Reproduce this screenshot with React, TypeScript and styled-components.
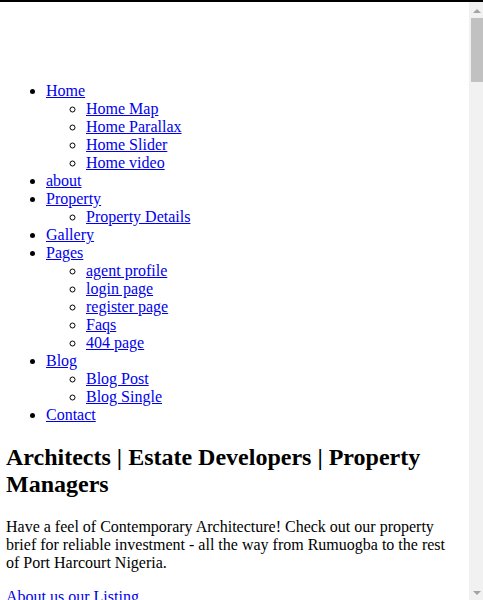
import React from "react";
import styled, { createGlobalStyle } from "styled-components";

const GlobalStyle = createGlobalStyle`
  html {
    border-top: 2px solid #000;
  }
  body {
    margin: 0 21px 0 6px;
    font-family: "Liberation Serif", "Times New Roman", serif;
    font-size: 16px;
    color: #000;
    background: #fff;
  }
`;

// fake window scrollbar, the headless browser hides the real one
const ScrollTrack = styled.div`
  position: fixed;
  top: 2px;
  right: 0;
  bottom: 0;
  width: 14px;
  background: #f1f1f1;
  display: flex;
  flex-direction: column;
  align-items: center;
`;

const Arrow = styled.div<{ $down?: boolean }>`
  width: 0;
  height: 0;
  margin: 7px 0 5px 1px;
  border-left: 4px solid transparent;
  border-right: 4px solid transparent;
  ${(p) => (p.$down ? "border-top: 4px solid #a3a3a3;" : "border-bottom: 4px solid #a3a3a3;")}
`;

const Thumb = styled.div`
  align-self: stretch;
  margin-left: 2px;
  height: 64px;
  background: #c1c1c1;
`;

const Spacer = styled.div`
  flex: 1;
`;

const Header = styled.header`
  height: 64px;
`;

const Menu = styled.ul`
  margin: 16px 0;
  padding-left: 40px;
  list-style: disc;
`;

const SubMenu = styled.ul`
  margin: 0;
  padding-left: 40px;
  list-style: circle;
`;

const MenuLink = styled.a`
  color: #0000ee;
  text-decoration: underline;
`;

const Title = styled.h2`
  font-size: 24px;
  font-weight: bold;
  margin: 20px 0;
`;

const Intro = styled.p`
  margin: 16px 0;
`;

const Actions = styled.div`
  margin: 16px 0;
`;

const ActionLink = styled.a`
  color: #0000ee;
  text-decoration: underline;
`;

type Item = { label: string; children?: string[] };

const menu: Item[] = [
  { label: "Home", children: ["Home Map", "Home Parallax", "Home Slider", "Home video"] },
  { label: "about" },
  { label: "Property", children: ["Property Details"] },
  { label: "Gallery" },
  { label: "Pages", children: ["agent profile", "login page", "register page", "Faqs", "404 page"] },
  { label: "Blog", children: ["Blog Post", "Blog Single"] },
  { label: "Contact" },
];

export default function App() {
  return (
    <>
      <GlobalStyle />
      <Header />
      <nav>
        <Menu>
          {menu.map((item) => (
            <li key={item.label}>
              <MenuLink href="#">{item.label}</MenuLink>
              {item.children && (
                <SubMenu>
                  {item.children.map((c) => (
                    <li key={c}>
                      <MenuLink href="#">{c}</MenuLink>
                    </li>
                  ))}
                </SubMenu>
              )}
            </li>
          ))}
        </Menu>
      </nav>
      <section>
        <Title>Architects | Estate Developers | Property Managers</Title>
        <Intro>
          Have a feel of Contemporary Architecture! Check out our property brief for reliable
          investment - all the way from Rumuogba to the rest of Port Harcourt Nigeria.
        </Intro>
        <Actions>
          <ActionLink href="#">About us</ActionLink> <ActionLink href="#">our Listing</ActionLink>
        </Actions>
      </section>
      <ScrollTrack>
        <Arrow />
        <Thumb />
        <Spacer />
        <Arrow $down />
      </ScrollTrack>
    </>
  );
}
